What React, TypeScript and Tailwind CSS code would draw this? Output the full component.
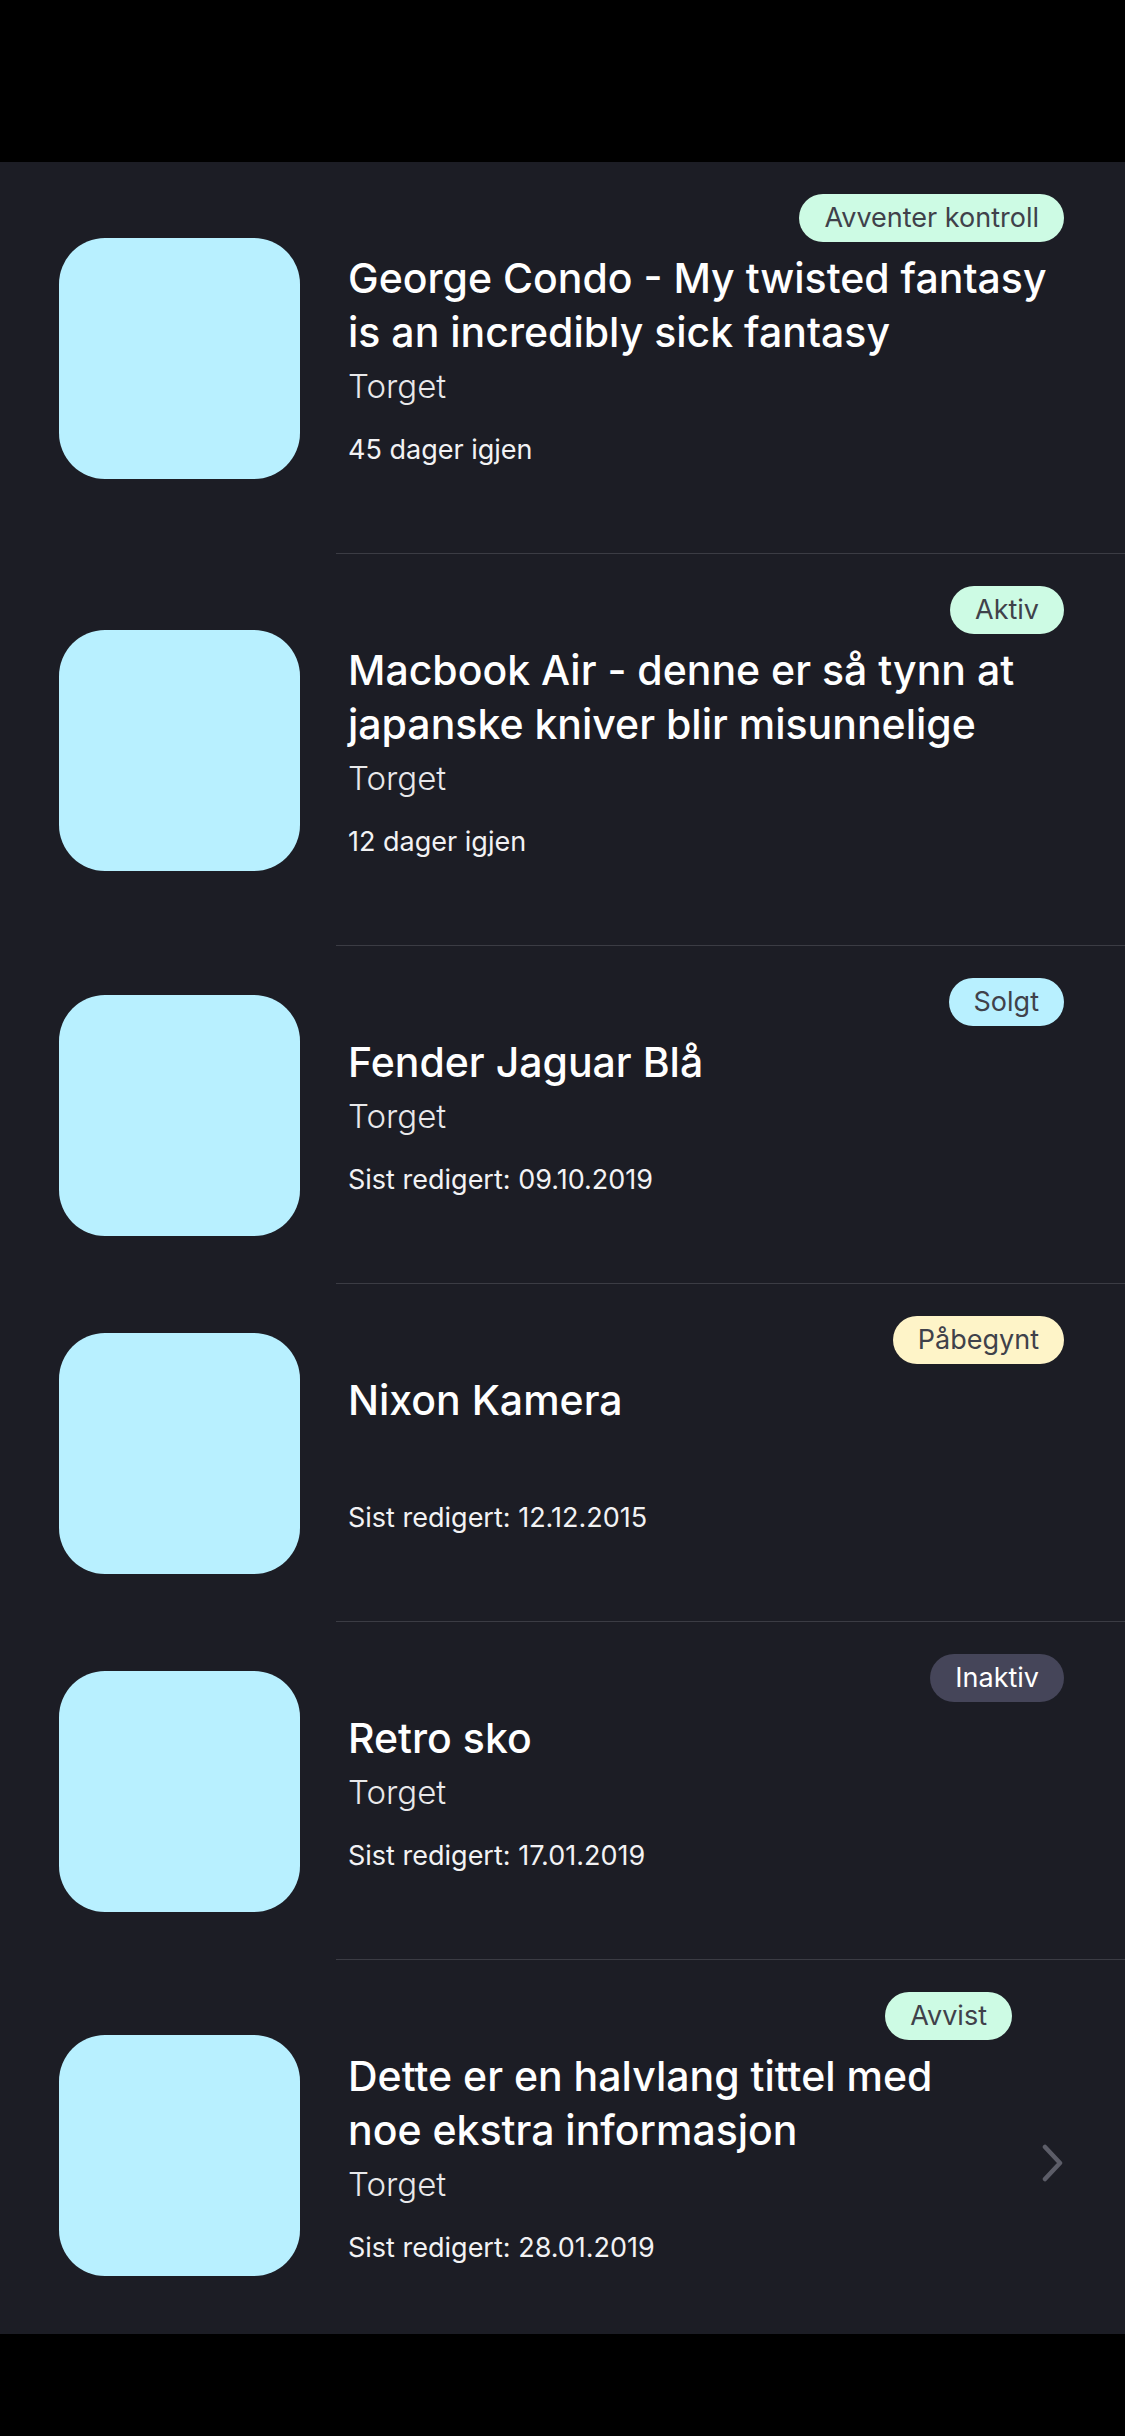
const ITEMS = [
  {
    title: "George Condo - My twisted fantasy is an incredibly sick fantasy",
    place: "Torget",
    meta: "45 dager igjen",
    status: "Avventer kontroll",
    tone: "mint",
  },
  {
    title: "Macbook Air - denne er så tynn at japanske kniver blir misunnelige",
    place: "Torget",
    meta: "12 dager igjen",
    status: "Aktiv",
    tone: "mint",
  },
  {
    title: "Fender Jaguar Blå",
    place: "Torget",
    meta: "Sist redigert: 09.10.2019",
    status: "Solgt",
    tone: "blue",
  },
  {
    title: "Nixon Kamera",
    place: "",
    meta: "Sist redigert: 12.12.2015",
    status: "Påbegynt",
    tone: "yellow",
  },
  {
    title: "Retro sko",
    place: "Torget",
    meta: "Sist redigert: 17.01.2019",
    status: "Inaktiv",
    tone: "dark",
  },
  {
    title: "Dette er en halvlang tittel med noe ekstra informasjon",
    place: "Torget",
    meta: "Sist redigert: 28.01.2019",
    status: "Avvist",
    tone: "mint",
    chevron: true,
  },
];

const TONES: Record<string, string> = {
  mint: "bg-[#cdfbe4] text-[#40414a]",
  blue: "bg-[#b8f0ff] text-[#40414a]",
  yellow: "bg-[#fef4c8] text-[#40414a]",
  dark: "bg-[#454559] text-white",
};

function Chevron() {
  return (
    <svg width="24" height="38" viewBox="0 0 24 38" fill="none">
      <path
        d="M4 3 L19 19 L4 35"
        stroke="#5c5d68"
        strokeWidth="4.5"
        strokeLinecap="round"
        strokeLinejoin="round"
      />
    </svg>
  );
}

type Item = (typeof ITEMS)[number] & { chevron?: boolean };

function Row({ item, last }: { item: Item; last: boolean }) {
  return (
    <div className="flex items-center">
      <div className="ml-[59px] w-[241px] h-[241px] shrink-0 rounded-[46px] bg-[#b8f0ff]" />
      <div
        className={`ml-[36px] flex-1 flex items-center ${
          last ? "" : "border-b border-[#3b3c44]"
        }`}
      >
        <div
          className={`flex-1 flex flex-col pl-[12px] pt-[32px] pb-[83px] ${
            item.chevron ? "pr-0" : "pr-[61px]"
          }`}
        >
          <span
            className={`self-end h-[48px] px-[25px] rounded-full flex items-center text-[27px] ${
              TONES[item.tone]
            }`}
          >
            {item.status}
          </span>
          <div className="mt-[9px] text-[41px] leading-[54px] font-medium text-white">
            {item.title}
          </div>
          <div className="h-[54px] text-[33px] leading-[54px] font-light text-[#e8e8ea]">
            {item.place}
          </div>
          <div className="mt-[17px] text-[27px] leading-[40px] text-[#f2f2f4]">
            {item.meta}
          </div>
        </div>
        {item.chevron && (
          <div className="w-[113px] flex shrink-0 pl-[29px] pt-[14px]">
            <Chevron />
          </div>
        )}
      </div>
    </div>
  );
}

export default function App() {
  return (
    <div
      className="w-[1125px] h-[2436px] flex flex-col bg-black overflow-hidden"
      style={{ fontFamily: "Inter, 'Noto Sans', sans-serif" }}
    >
      <div className="h-[162px] shrink-0 bg-black" />
      <div className="flex-1 overflow-hidden bg-[#1c1d25]">
        {ITEMS.map((item, i) => (
          <Row key={i} item={item} last={i === ITEMS.length - 1} />
        ))}
      </div>
      <div className="h-[102px] shrink-0 bg-black" />
    </div>
  );
}
